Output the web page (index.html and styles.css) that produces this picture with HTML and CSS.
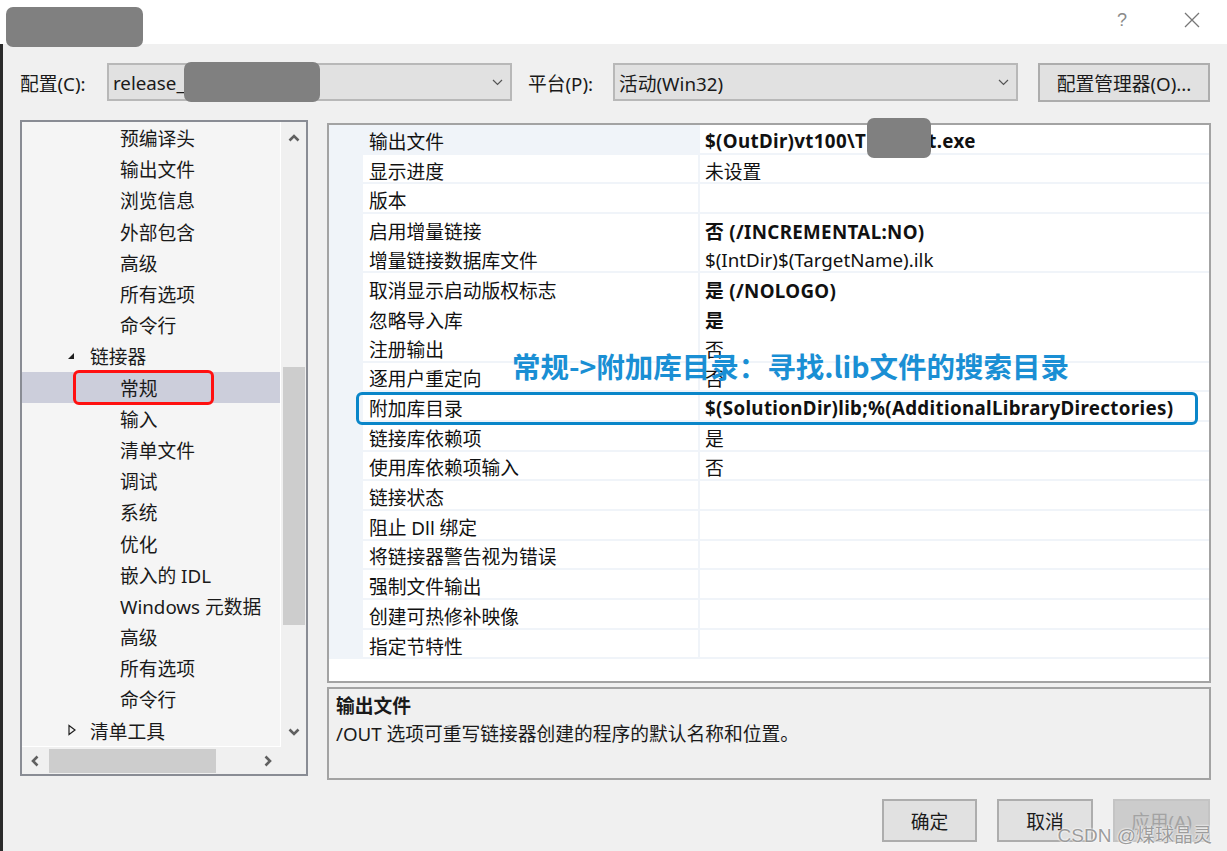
FILE: index.html
```html
<!DOCTYPE html>
<html lang="zh-CN">
<head>
<meta charset="utf-8">
<title>属性页</title>
<link rel="stylesheet" href="styles.css">
</head>
<body>
<div class="window">
  <div class="titlebar">
    <div class="blur blur-title"></div>
    <div class="title-help">?</div>
    <div class="title-close">
      <svg width="16" height="16" viewBox="0 0 16 16"><path d="M1 1 L15 15 M15 1 L1 15" stroke="#777" stroke-width="1.3" fill="none"/></svg>
    </div>
  </div>

  <div class="client">
    <div class="config-row">
      <div class="label label-config">配置(C):</div>
      <div class="combo">
        <span class="combo-text">release_</span>
        <div class="blur blur-combo"></div>
        <svg class="chev" width="11" height="7" viewBox="0 0 11 7"><path d="M1 1 L5.5 5.5 L10 1" stroke="#555" stroke-width="1.2" fill="none"/></svg>
      </div>
      <div class="label label-platform">平台(P):</div>
      <div class="combo">
        <span class="combo-text">活动(Win32)</span>
        <svg class="chev" width="11" height="7" viewBox="0 0 11 7"><path d="M1 1 L5.5 5.5 L10 1" stroke="#555" stroke-width="1.2" fill="none"/></svg>
      </div>
      <div class="btn btn-manager">配置管理器(O)...</div>
    </div>

    <div class="main">
      <div class="tree">
        <div class="tree-content">
          <div class="tree-item child">预编译头</div>
          <div class="tree-item child">输出文件</div>
          <div class="tree-item child">浏览信息</div>
          <div class="tree-item child">外部包含</div>
          <div class="tree-item child">高级</div>
          <div class="tree-item child">所有选项</div>
          <div class="tree-item child">命令行</div>
          <div class="tree-item parent">
            <svg class="tri" width="10" height="10" viewBox="0 0 10 10"><polygon points="7,2 7,8 1,8" fill="#1e1e1e"/></svg>
            <span>链接器</span>
          </div>
          <div class="tree-item child selected">常规</div>
          <div class="tree-item child">输入</div>
          <div class="tree-item child">清单文件</div>
          <div class="tree-item child">调试</div>
          <div class="tree-item child">系统</div>
          <div class="tree-item child">优化</div>
          <div class="tree-item child">嵌入的 IDL</div>
          <div class="tree-item child">Windows 元数据</div>
          <div class="tree-item child">高级</div>
          <div class="tree-item child">所有选项</div>
          <div class="tree-item child">命令行</div>
          <div class="tree-item parent">
            <svg class="tri" width="10" height="12" viewBox="0 0 10 12"><polygon points="2,1.5 8,6 2,10.5" fill="none" stroke="#1e1e1e" stroke-width="1.2"/></svg>
            <span>清单工具</span>
          </div>
        </div>
        <div class="vscroll">
          <div class="sarrow sarrow-v">
            <svg width="12" height="8" viewBox="0 0 12 8"><path d="M1.5 6.5 L6 2 L10.5 6.5" stroke="#606060" stroke-width="2.6" fill="none"/></svg>
          </div>
          <div class="vtrack"><div class="vthumb"></div></div>
          <div class="sarrow sarrow-v">
            <svg width="12" height="8" viewBox="0 0 12 8"><path d="M1.5 1.5 L6 6 L10.5 1.5" stroke="#606060" stroke-width="2.6" fill="none"/></svg>
          </div>
        </div>
        <div class="hscroll">
          <div class="sarrow sarrow-h">
            <svg width="8" height="12" viewBox="0 0 8 12"><path d="M6.5 1.5 L2 6 L6.5 10.5" stroke="#606060" stroke-width="2.6" fill="none"/></svg>
          </div>
          <div class="htrack"><div class="hthumb"></div></div>
          <div class="sarrow sarrow-h">
            <svg width="8" height="12" viewBox="0 0 8 12"><path d="M1.5 1.5 L6 6 L1.5 10.5" stroke="#606060" stroke-width="2.6" fill="none"/></svg>
          </div>
        </div>
        <div class="scorner"></div>
      </div>

      <div class="right">
        <div class="pgrid">
          <div class="prow first">
            <div class="pmargin"></div>
            <div class="pname">输出文件</div>
            <div class="pval bold">$(OutDir)vt100\T<span class="hidden-part"><span class="blur blur-val"></span></span>t.exe</div>
          </div>
          <div class="prow"><div class="pmargin"></div><div class="pname">显示进度</div><div class="pval">未设置</div></div>
          <div class="prow"><div class="pmargin"></div><div class="pname">版本</div><div class="pval"></div></div>
          <div class="prow"><div class="pmargin"></div><div class="pname">启用增量链接</div><div class="pval bold">否 (/INCREMENTAL:NO)</div></div>
          <div class="prow"><div class="pmargin"></div><div class="pname">增量链接数据库文件</div><div class="pval">$(IntDir)$(TargetName).ilk</div></div>
          <div class="prow"><div class="pmargin"></div><div class="pname">取消显示启动版权标志</div><div class="pval bold">是 (/NOLOGO)</div></div>
          <div class="prow"><div class="pmargin"></div><div class="pname">忽略导入库</div><div class="pval bold">是</div></div>
          <div class="prow"><div class="pmargin"></div><div class="pname">注册输出</div><div class="pval">否</div></div>
          <div class="prow"><div class="pmargin"></div><div class="pname">逐用户重定向</div><div class="pval">否</div></div>
          <div class="prow"><div class="pmargin"></div><div class="pname">附加库目录</div><div class="pval bold">$(SolutionDir)lib;%(AdditionalLibraryDirectories)</div></div>
          <div class="prow"><div class="pmargin"></div><div class="pname">链接库依赖项</div><div class="pval">是</div></div>
          <div class="prow"><div class="pmargin"></div><div class="pname">使用库依赖项输入</div><div class="pval">否</div></div>
          <div class="prow"><div class="pmargin"></div><div class="pname">链接状态</div><div class="pval"></div></div>
          <div class="prow"><div class="pmargin"></div><div class="pname">阻止 Dll 绑定</div><div class="pval"></div></div>
          <div class="prow"><div class="pmargin"></div><div class="pname">将链接器警告视为错误</div><div class="pval"></div></div>
          <div class="prow"><div class="pmargin"></div><div class="pname">强制文件输出</div><div class="pval"></div></div>
          <div class="prow"><div class="pmargin"></div><div class="pname">创建可热修补映像</div><div class="pval"></div></div>
          <div class="prow"><div class="pmargin"></div><div class="pname">指定节特性</div><div class="pval"></div></div>
        </div>
        <div class="desc">
          <div class="desc-title">输出文件</div>
          <div class="desc-text">/OUT 选项可重写链接器创建的程序的默认名称和位置。</div>
        </div>
      </div>
    </div>

    <div class="buttons">
      <div class="btn btn-ok">确定</div>
      <div class="btn btn-cancel">取消</div>
      <div class="btn btn-apply disabled">应用(A)</div>
    </div>
  </div>

  <div class="mark-red"></div>
  <div class="mark-blue"></div>
  <div class="annotation">常规-&gt;附加库目录：寻找.lib文件的搜索目录</div>
  <div class="watermark">CSDN @煤球晶灵</div>
</div>
</body>
</html>
```

FILE: styles.css
```css
* { box-sizing: border-box; }

html, body {
  margin: 0;
  padding: 0;
}

body {
  width: 1227px;
  height: 851px;
  overflow: hidden;
  font-family: "Noto Sans", "Noto Sans CJK SC", sans-serif;
  font-size: 18.75px;
  color: #1a1a1a;
}

.window {
  position: relative;
  width: 1227px;
  height: 851px;
  background: #f0f0f0;
  display: flex;
  flex-direction: column;
}

/* title bar */
.titlebar {
  height: 44px;
  flex: none;
  background: #ffffff;
  display: flex;
  align-items: flex-start;
  padding-left: 6px;
}

.blur {
  background: #808080;
  border-radius: 7px;
}

.blur-title {
  position: relative;
  z-index: 2;
  width: 137px;
  height: 40px;
  margin-top: 7px;
}

.title-help {
  margin-left: auto;
  margin-top: 10px;
  width: 20px;
  text-align: center;
  font-family: "Liberation Sans", sans-serif;
  font-size: 18px;
  color: #8a8a8a;
}

.title-close {
  margin-left: 52px;
  margin-right: 27px;
  margin-top: 12px;
  width: 16px;
  height: 16px;
  display: flex;
}

/* client area */
.client {
  flex: 1;
  border-left: 3px solid #2b2b2b;
  padding: 18px 0 0 17px;
  display: flex;
  flex-direction: column;
}

.config-row {
  display: flex;
  align-items: center;
  height: 40px;
}

.label {
  color: #1a1a1a;
  white-space: nowrap;
}

.label-config { width: 87px; }

.label-platform {
  margin-left: 16px;
  width: 85px;
}

.combo {
  position: relative;
  width: 405px;
  height: 38px;
  background: #e1e1e1;
  border: 2px solid #b8b8b8;
  display: flex;
  align-items: center;
  padding-left: 4px;
}

.combo-text { white-space: nowrap; }

.chev {
  margin-left: auto;
  margin-right: 7px;
}

.blur-combo {
  position: absolute;
  left: 75px;
  top: -3px;
  width: 136px;
  height: 40px;
}

.btn {
  display: flex;
  align-items: center;
  justify-content: center;
  background: #e1e1e1;
  border: 2px solid #adadad;
  white-space: nowrap;
  color: #1a1a1a;
}

.btn-manager {
  margin-left: 20px;
  width: 172px;
  height: 39px;
}

/* main area */
.main {
  margin-top: 18px;
  display: flex;
  align-items: flex-start;
}

.tree {
  width: 288px;
  height: 656px;
  border: 2px solid #898c94;
  background: #f0f0f0;
  display: grid;
  grid-template-columns: 259px 25px;
  grid-template-rows: 625px 27px;
}

.tree-content {
  background: #f5f5f5;
  border-right: 1px solid #ffffff;
  border-bottom: 1px solid #ffffff;
  padding-top: 0px;
  overflow: hidden;
}

.tree-item {
  height: 31.2px;
  display: flex;
  align-items: center;
  white-space: nowrap;
  color: #1a1a1a;
}

.tree-item.child { padding-left: 98px; }

.tree-item.parent { padding-left: 45px; }

.tree-item .tri {
  margin-right: 13px;
  flex: none;
}

.tree-item.selected { background: #cccedb; }

.vscroll {
  display: flex;
  flex-direction: column;
  background: #f0f0f0;
}

.sarrow {
  display: flex;
  align-items: center;
  justify-content: center;
}

.sarrow-v { height: 31px; }

.vtrack { flex: 1; }

.vthumb {
  margin: 214px 1px 0 2px;
  height: 258px;
  background: #cdcdcd;
}

.hscroll {
  display: flex;
  background: #f0f0f0;
}

.sarrow-h { width: 26px; }

.htrack { flex: 1; display: flex; align-items: center; }

.hthumb {
  margin-left: 1px;
  width: 167px;
  height: 24px;
  background: #cdcdcd;
}

.scorner { background: #f0f0f0; }

.right {
  margin-left: 19px;
  margin-top: 3px;
  display: flex;
  flex-direction: column;
}

/* property grid */
.pgrid {
  width: 884px;
  height: 560px;
  border: 2px solid #a3a3a3;
  background: #ffffff;
}

.prow {
  height: 29.7px;
  display: grid;
  grid-template-columns: 32px 335px 1fr;
  column-gap: 2px;
  padding-bottom: 2px;
  background: #f0f4f9;
}

.pname, .pval {
  background: #ffffff;
  display: flex;
  align-items: center;
  white-space: nowrap;
  overflow: hidden;
  color: #111;
  padding-top: 3px;
}

.pname { padding-left: 6px; }

.pval { padding-left: 5px; }

.prow.first .pname { background: transparent; }

.bold {
  font-weight: 700;
  letter-spacing: 0.33px;
}

.hidden-part {
  position: relative;
  display: inline-block;
  width: 62px;
  height: 10px;
}

.pval.bold { overflow: visible; }

.prow.first .pval { overflow: visible; position: relative; z-index: 2; }

.blur-val {
  position: absolute;
  left: 1px;
  top: -18px;
  width: 64px;
  height: 40px;
}

/* description */
.desc {
  margin-top: 4px;
  width: 884px;
  height: 93px;
  border: 2px solid #a3a3a3;
  background: #f0f0f0;
  padding: 3px 7px;
  line-height: 28px;
}

.desc-title { font-weight: 700; }

/* buttons */
.buttons {
  margin-top: 19px;
  display: flex;
  justify-content: flex-end;
  gap: 20px;
  padding-right: 17px;
}

.buttons .btn { height: 43px; }

.btn-ok { width: 95px; }
.btn-cancel { width: 96px; }
.btn-apply { width: 97px; }

.btn.disabled {
  background: #cccccc;
  border-color: #c4c4c4;
  color: #a3a3a3;
}

/* overlays */
.mark-red {
  position: absolute;
  left: 73px;
  top: 370px;
  width: 141px;
  height: 35px;
  border: 3px solid #ff1010;
  border-radius: 6px;
}

.mark-blue {
  position: absolute;
  left: 356px;
  top: 392px;
  width: 842px;
  height: 33px;
  border: 3px solid #0a86c9;
  border-radius: 6px;
}

.annotation {
  position: absolute;
  left: 512px;
  top: 351px;
  line-height: 30px;
  font-family: "Noto Sans CJK SC", sans-serif;
  font-size: 28.5px;
  font-weight: 700;
  color: #1a8fd4;
  white-space: nowrap;
}

.watermark {
  position: absolute;
  right: 15px;
  top: 820px;
  font-family: "Liberation Sans", "Noto Sans CJK SC", sans-serif;
  font-size: 19px;
  color: #9c9c9c;
  white-space: nowrap;
  text-shadow: 0 0 2px #ffffff, 0 0 2px #ffffff;
}
```
